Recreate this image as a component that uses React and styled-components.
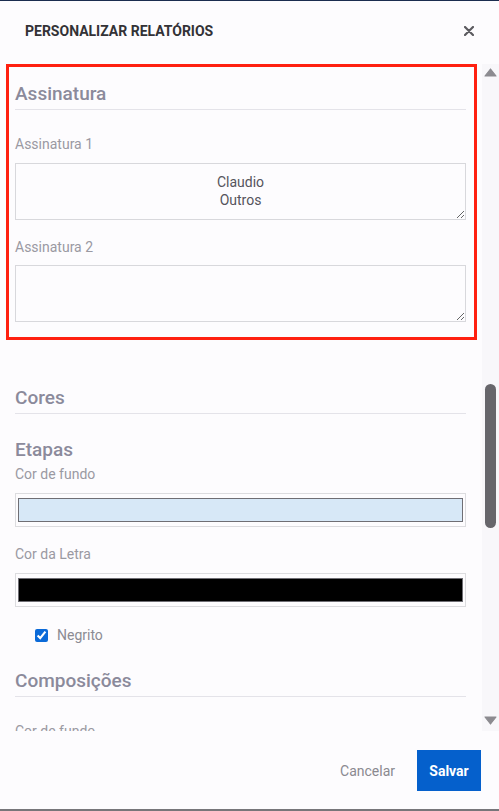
import React from 'react';
import styled, { createGlobalStyle } from 'styled-components';

const GlobalStyle = createGlobalStyle`
  html, body { margin: 0; padding: 0; background: #fdfcfe; }
  body { font-family: Roboto, "Noto Sans", Arial, sans-serif; }
  *, *::before, *::after { box-sizing: border-box; }
`;

const Modal = styled.div`
  width: 499px;
  height: 811px;
  display: flex;
  flex-direction: column;
  background: #fdfcfe;
  border-top: 1px solid #1b2d4f;
  border-bottom: 2px solid #77767a;
`;

const Header = styled.header`
  height: 63px;
  flex: none;
  display: flex;
  justify-content: space-between;
  align-items: flex-start;
  padding: 20px 25px 0 25px;
`;

const Title = styled.h1`
  margin: 0;
  font: 700 14px/20px Roboto, sans-serif;
  color: #333236;
`;

const CloseButton = styled.button`
  width: 10px;
  height: 20px;
  padding: 0;
  border: none;
  background: none;
  display: flex;
  align-items: center;
  justify-content: center;
  color: #5b5a5f;
`;

const Body = styled.div`
  height: 667px;
  flex: none;
  display: flex;
`;

const Scroller = styled.div`
  flex: 1;
  overflow: hidden;
  padding: 0 16px 0 15px;
`;

const Highlight = styled.section`
  border: 3px solid #ff2010;
  margin: 0 -11px 0 -9px;
  padding: 16px 8px 15px 6px;
`;

const SectionTitle = styled.h3`
  margin: ${p => p.$mt || 0}px 0 0 0;
  font: 500 19px/22px Roboto, sans-serif;
  color: #8b8a9b;
  padding-bottom: ${p => (p.$underline ? 4 : 0)}px;
  border-bottom: ${p => (p.$underline ? '1px solid #e4e3e9' : 'none')};
`;

const Label = styled.div`
  margin-top: ${p => p.$mt || 0}px;
  font: 400 14px/20px Roboto, sans-serif;
  color: #9a99a2;
`;

const TextArea = styled.textarea`
  display: block;
  width: 100%;
  height: 57px;
  margin-top: ${p => p.$mt || 0}px;
  border: 1px solid #d8d8dc;
  border-radius: 0;
  padding: 9px 12px 0;
  font: 400 14px/18px Roboto, sans-serif;
  color: #55545c;
  text-align: center;
  background: #fdfcfe;
  resize: vertical;
  outline: none;
`;

const ColorField = styled.div`
  margin-top: 9px;
  height: 34px;
  border: 1px solid #dcdcdf;
  padding: 4px 2px;
  display: flex;
`;

const Swatch = styled.div`
  flex: 1;
  border: 1px solid #6f6e74;
  background: ${p => p.$color};
`;

const CheckRow = styled.label`
  margin-top: 18px;
  height: 20px;
  display: flex;
  align-items: center;
  gap: 9px;
  padding-left: 20px;
  font: 400 14px/20px Roboto, sans-serif;
  color: #8c8b93;
`;

const Check = styled.input`
  margin: 0;
  width: 13px;
  height: 13px;
  accent-color: #0b6ad8;
`;

const Scrollbar = styled.div`
  width: 17px;
  flex: none;
  display: flex;
  flex-direction: column;
  background: #f8f7fa;
`;

const ScrollArrow = styled.div`
  height: 16px;
  flex: none;
  display: flex;
  align-items: center;
  justify-content: center;
  margin-bottom: ${p => (p.$dir === 'down' ? 3 : 0)}px;
  padding-right: 1px;
`;

const Track = styled.div`
  flex: 1;
`;

const Thumb = styled.div`
  margin: 304px 0 0 3px;
  width: 11px;
  height: 144px;
  border-radius: 6px;
  background: #67666b;
`;

const Footer = styled.footer`
  flex: 1;
  display: flex;
  justify-content: flex-end;
  align-items: flex-start;
  gap: 11px;
  padding: 19px 18px 0 0;
`;

const CancelButton = styled.button`
  height: 41px;
  padding: 0 11px;
  border: none;
  background: none;
  font: 400 14px Roboto, sans-serif;
  color: #8a8990;
`;

const SaveButton = styled.button`
  width: 64px;
  height: 41px;
  padding: 0;
  border: none;
  background: #0560cc;
  color: #ffffff;
  font: 700 14px Roboto, sans-serif;
`;

const Arrow = ({ dir }) => (
  <svg width="13" height="9" viewBox="0 0 13 9">
    <path
      d={dir === 'up' ? 'M6.5 1 L12 8 L1 8 Z' : 'M1 1 L12 1 L6.5 8 Z'}
      fill="#8c8b90"
      stroke="#8c8b90"
      strokeWidth="1.2"
      strokeLinejoin="round"
    />
  </svg>
);

export default function App() {
  return (
    <>
      <GlobalStyle />
      <Modal>
        <Header>
          <Title>PERSONALIZAR RELATÓRIOS</Title>
          <CloseButton aria-label="Fechar">
            <svg width="10" height="10" viewBox="0 0 10 10">
              <path d="M1 1 L9 9 M9 1 L1 9" stroke="currentColor" strokeWidth="2.2" strokeLinecap="round" />
            </svg>
          </CloseButton>
        </Header>
        <Body>
          <Scroller>
            <Highlight>
              <SectionTitle $underline>Assinatura</SectionTitle>
              <Label $mt={24}>Assinatura 1</Label>
              <TextArea $mt={9} readOnly defaultValue={'Claudio\nOutros'} />
              <Label $mt={17}>Assinatura 2</Label>
              <TextArea $mt={8} readOnly defaultValue="" />
            </Highlight>
            <SectionTitle $underline $mt={47}>Cores</SectionTitle>
            <SectionTitle $mt={25}>Etapas</SectionTitle>
            <Label $mt={3}>Cor de fundo</Label>
            <ColorField>
              <Swatch $color="#d7e8f7" />
            </ColorField>
            <Label $mt={17}>Cor da Letra</Label>
            <ColorField>
              <Swatch $color="#000000" />
            </ColorField>
            <CheckRow>
              <Check type="checkbox" checked readOnly />
              Negrito
            </CheckRow>
            <SectionTitle $underline $mt={25}>Composições</SectionTitle>
            <Label $mt={24}>Cor de fundo</Label>
          </Scroller>
          <Scrollbar>
            <ScrollArrow $dir="up"><Arrow dir="up" /></ScrollArrow>
            <Track><Thumb /></Track>
            <ScrollArrow $dir="down"><Arrow dir="down" /></ScrollArrow>
          </Scrollbar>
        </Body>
        <Footer>
          <CancelButton>Cancelar</CancelButton>
          <SaveButton>Salvar</SaveButton>
        </Footer>
      </Modal>
    </>
  );
}
